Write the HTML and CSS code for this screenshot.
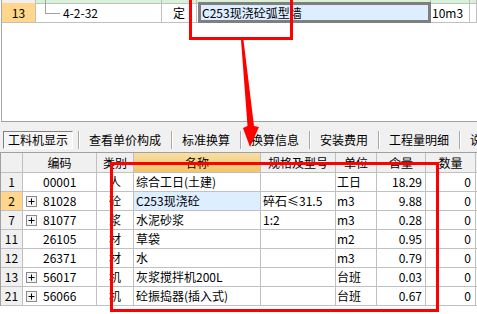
FILE: index.html
```html
<!DOCTYPE html>
<html>
<head>
<meta charset="utf-8">
<link rel="stylesheet" href="styles.css">
</head>
<body>
<div class="page">
  <div class="top-panel">
    <div class="top-grid">
      <div class="tg-row tg-head">
        <div class="tc num"></div>
        <div class="tc code"><span class="tree tree-up"></span><span class="peek">4-2-31</span></div>
        <div class="tc type"></div>
        <div class="tc name"></div>
        <div class="tc unit"></div>
        <div class="tc rest"></div>
      </div>
      <div class="tg-row tg-item">
        <div class="tc num cur">13</div>
        <div class="tc code"><span class="tree"></span><span class="ctext">4-2-32</span></div>
        <div class="tc type">定</div>
        <div class="tc name"><div class="editor">C253现浇砼弧型墙</div></div>
        <div class="tc unit">10m3</div>
        <div class="tc rest"></div>
      </div>
    </div>
  </div>

  <div class="toolbar">
    <div class="tab active">工料机显示</div>
    <span class="sep"></span>
    <div class="tab">查看单价构成</div>
    <span class="sep"></span>
    <div class="tab">标准换算</div>
    <span class="sep"></span>
    <div class="tab">换算信息</div>
    <span class="sep"></span>
    <div class="tab">安装费用</div>
    <span class="sep"></span>
    <div class="tab">工程量明细</div>
    <span class="sep"></span>
    <div class="tab">说明信息</div>
  </div>

  <div class="grid">
    <div class="g-row g-head">
      <div class="gc num"></div>
      <div class="gc hc">编码</div>
      <div class="gc hc">类别</div>
      <div class="gc hc hname">名称</div>
      <div class="gc hc">规格及型号</div>
      <div class="gc hc">单位</div>
      <div class="gc hc">含量</div>
      <div class="gc hc">数量</div>
      <div class="gc end"></div>
    </div>

    <div class="g-row">
      <div class="gc num">1</div>
      <div class="gc code"><span class="exp-slot"></span>00001</div>
      <div class="gc type">人</div>
      <div class="gc name">综合工日(土建)</div>
      <div class="gc spec"></div>
      <div class="gc unit">工日</div>
      <div class="gc val">18.29</div>
      <div class="gc qty">0</div>
      <div class="gc end"></div>
    </div>

    <div class="g-row">
      <div class="gc num cur">2</div>
      <div class="gc code"><svg class="exp" width="11" height="11" viewBox="0 0 11 11"><rect x="0.5" y="0.5" width="10" height="10" fill="#f4f4f4" stroke="#8a8a8a"/><path d="M2.5 5.5h6M5.5 2.5v6" stroke="#000" stroke-width="1"/></svg>81028</div>
      <div class="gc type">砼</div>
      <div class="gc name selcell">C253现浇砼</div>
      <div class="gc spec">碎石≤31.5</div>
      <div class="gc unit">m3</div>
      <div class="gc val">9.88</div>
      <div class="gc qty">0</div>
      <div class="gc end"></div>
    </div>

    <div class="g-row">
      <div class="gc num">7</div>
      <div class="gc code"><svg class="exp" width="11" height="11" viewBox="0 0 11 11"><rect x="0.5" y="0.5" width="10" height="10" fill="#f4f4f4" stroke="#8a8a8a"/><path d="M2.5 5.5h6M5.5 2.5v6" stroke="#000" stroke-width="1"/></svg>81077</div>
      <div class="gc type">浆</div>
      <div class="gc name">水泥砂浆</div>
      <div class="gc spec">1:2</div>
      <div class="gc unit">m3</div>
      <div class="gc val">0.28</div>
      <div class="gc qty">0</div>
      <div class="gc end"></div>
    </div>

    <div class="g-row">
      <div class="gc num">11</div>
      <div class="gc code"><span class="exp-slot"></span>26105</div>
      <div class="gc type">材</div>
      <div class="gc name">草袋</div>
      <div class="gc spec"></div>
      <div class="gc unit">m2</div>
      <div class="gc val">0.95</div>
      <div class="gc qty">0</div>
      <div class="gc end"></div>
    </div>

    <div class="g-row">
      <div class="gc num">12</div>
      <div class="gc code"><span class="exp-slot"></span>26371</div>
      <div class="gc type">材</div>
      <div class="gc name">水</div>
      <div class="gc spec"></div>
      <div class="gc unit">m3</div>
      <div class="gc val">0.79</div>
      <div class="gc qty">0</div>
      <div class="gc end"></div>
    </div>

    <div class="g-row">
      <div class="gc num">13</div>
      <div class="gc code"><svg class="exp" width="11" height="11" viewBox="0 0 11 11"><rect x="0.5" y="0.5" width="10" height="10" fill="#f4f4f4" stroke="#8a8a8a"/><path d="M2.5 5.5h6M5.5 2.5v6" stroke="#000" stroke-width="1"/></svg>56017</div>
      <div class="gc type">机</div>
      <div class="gc name">灰浆搅拌机200L</div>
      <div class="gc spec"></div>
      <div class="gc unit">台班</div>
      <div class="gc val">0.03</div>
      <div class="gc qty">0</div>
      <div class="gc end"></div>
    </div>

    <div class="g-row">
      <div class="gc num">21</div>
      <div class="gc code"><svg class="exp" width="11" height="11" viewBox="0 0 11 11"><rect x="0.5" y="0.5" width="10" height="10" fill="#f4f4f4" stroke="#8a8a8a"/><path d="M2.5 5.5h6M5.5 2.5v6" stroke="#000" stroke-width="1"/></svg>56066</div>
      <div class="gc type">机</div>
      <div class="gc name">砼振捣器(插入式)</div>
      <div class="gc spec"></div>
      <div class="gc unit">台班</div>
      <div class="gc val">0.67</div>
      <div class="gc qty">0</div>
      <div class="gc end"></div>
    </div>
  </div>

  <div class="mark mark-top"></div>
  <div class="mark mark-bottom"></div>
  <svg class="arrow" width="477" height="314" viewBox="0 0 477 314">
    <polygon points="241,40 243.5,40 254,126 259,127 250,147 243,128 247.5,126" fill="#ff0000"/>
  </svg>
</div>
</body>
</html>
```

FILE: styles.css
```css
* {
  box-sizing: border-box;
}

body {
  margin: 0;
  font-family: "Noto Sans CJK SC", "Liberation Sans", sans-serif;
  font-size: 12px;
  line-height: 1;
  color: #000;
  background: #fff;
}

.page {
  position: relative;
  width: 477px;
  height: 314px;
  overflow: hidden;
  background: #fff;
}

/* ---------- upper panel ---------- */
.top-panel {
  height: 122px;
  margin-left: 1px;
  border-left: 1px solid #a8a8a8;
  border-bottom: 1px solid #a0a0a0;
  overflow: hidden;
}

.top-grid {
  margin-top: -13px;
}

.tg-row {
  display: grid;
  grid-template-columns: 34px 126px 35px 234px 39px 1fr;
}

.tg-head {
  height: 16px;
  background: #d8f2d8;
}

.tg-item {
  height: 20px;
}

.tc {
  display: flex;
  align-items: center;
  white-space: nowrap;
  border-right: 1px solid #c0c0c0;
  border-bottom: 1px solid #c0c0c0;
}

.tc.num {
  justify-content: center;
  background: #f0f0f0;
}

.tc.num.cur {
  background: #ffd68b;
}

.tc.code {
  padding-left: 9px;
}

.tree {
  align-self: flex-start;
  width: 15px;
  height: 11px;
  border-left: 1px solid #a0a0a0;
  border-bottom: 1px solid #a0a0a0;
  flex: none;
}

.tree-up {
  height: 16px;
  border-bottom: none;
}

.peek {
  align-self: flex-start;
  margin: 1px 0 0 7px;
  height: 12px;
}

.ctext {
  margin-left: 3px;
}

.tc.type {
  justify-content: center;
}

.tc.name {
  position: relative;
}

.editor {
  position: absolute;
  left: 1px;
  top: -1px;
  right: -1px;
  bottom: -1px;
  border: 3px solid #7f7f7f;
  background: #dceeff;
  padding-left: 1px;
  display: flex;
  align-items: center;
}

.tc.unit {
  padding-left: 1px;
}

/* ---------- toolbar ---------- */
.toolbar {
  height: 30px;
  background: #f0f0f0;
  display: flex;
  align-items: center;
  padding: 6px 0 0 3px;
  white-space: nowrap;
}

.tab {
  flex: none;
  margin: 0 10px 0 9px;
}

.tab.active {
  width: 70px;
  height: 18px;
  margin: 0 5px 0 0;
  display: flex;
  align-items: center;
  justify-content: center;
  border: 1px solid;
  border-color: #808080 #ffffff #ffffff #808080;
  background: #f5f5f5;
}

.sep {
  flex: none;
  width: 2px;
  height: 18px;
  border-left: 1px solid #a8a8a8;
  border-right: 1px solid #ffffff;
}

/* ---------- lower grid ---------- */
.grid {
  border-left: 1px solid #a0a0a0;
}

.g-row {
  display: grid;
  grid-template-columns: 22px 74px 37px 127px 75px 41px 49px 50px 1fr;
  height: 19px;
}

.g-head {
  height: 21px;
  border-top: 1px solid #a0a0a0;
  background: #f0f0f0;
}

.gc {
  display: flex;
  align-items: center;
  white-space: nowrap;
  border-right: 1px solid #c0c0c0;
  border-bottom: 1px solid #c0c0c0;
}

.gc.end {
  border-right: none;
}

.gc.hc {
  justify-content: center;
}

.gc.hname {
  background: linear-gradient(#f9dfa6, #f1c468);
}

.gc.num {
  justify-content: center;
  background: #f0f0f0;
}

.gc.num.cur {
  background: #ffd68b;
}

.gc.code {
  padding-left: 3px;
}

.exp,
.exp-slot {
  flex: none;
  width: 11px;
  height: 11px;
  margin-right: 6px;
}

.gc.type {
  justify-content: center;
}

.gc.name {
  padding-left: 2px;
}

.gc.selcell {
  background: #dceeff;
}

.gc.spec {
  padding-left: 2px;
}

.gc.unit {
  padding-left: 1px;
}

.gc.val {
  justify-content: flex-end;
  padding-right: 3px;
}

.gc.qty {
  justify-content: flex-end;
  padding-right: 4px;
}

/* ---------- annotations ---------- */
.mark {
  position: absolute;
  border: 3px solid #ff0000;
}

.mark-top {
  left: 189px;
  top: -10px;
  width: 104px;
  height: 50px;
}

.mark-bottom {
  left: 110px;
  top: 162px;
  width: 329px;
  height: 150px;
}

.arrow {
  position: absolute;
  left: 0;
  top: 0;
  pointer-events: none;
}
```
